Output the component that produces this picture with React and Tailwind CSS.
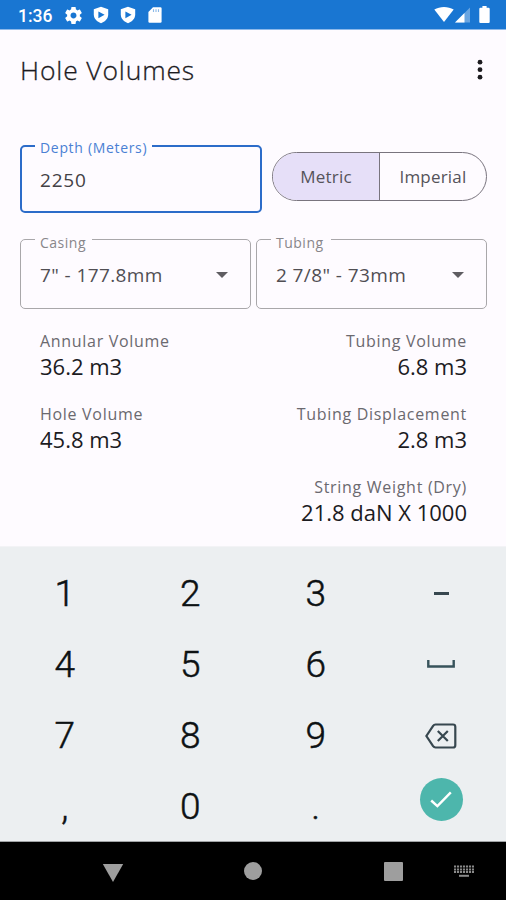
function ShieldPlay() {
  return (
    <svg viewBox="0 0 16 18" className="h-[18px] w-4">
      <path d="M8 .8 15.2 3.2V8.5C15.2 12.6 12 15.8 8 17.2 4 15.8 .8 12.6 .8 8.5V3.2Z" fill="#fff" />
      <path d="M5.4 5.4 11.6 8.8 5.4 12.2Z" fill="#1976d2" />
    </svg>
  );
}

function StatusBar() {
  return (
    <header className="flex h-[30px] items-start border-b border-[#8db9ea] bg-[#1976d2] text-white">
      <span className="ml-[18px] mt-[5px] w-[35px] font-['Roboto',sans-serif] text-[17.5px] leading-[22px] font-medium">1:36</span>
      <div className="mt-[6px] ml-[12px] flex items-center">
        <svg viewBox="2 2 20 20" className="h-[17px] w-[17px]">
          <path
            fill="#fff"
            d="M19.43 12.98c.04-.32.07-.64.07-.98s-.03-.66-.07-.98l2.11-1.65c.19-.15.24-.42.12-.64l-2-3.46c-.12-.22-.39-.3-.61-.22l-2.49 1c-.52-.4-1.08-.73-1.69-.98l-.38-2.65C14.46 2.18 14.25 2 14 2h-4c-.25 0-.46.18-.49.42l-.38 2.65c-.61.25-1.17.59-1.69.98l-2.49-1c-.23-.09-.49 0-.61.22l-2 3.46c-.13.22-.07.49.12.64l2.11 1.65c-.04.32-.07.65-.07.98s.03.66.07.98l-2.11 1.65c-.19.15-.24.42-.12.64l2 3.46c.12.22.39.3.61.22l2.49-1c.52.4 1.08.73 1.69.98l.38 2.65c.03.24.24.42.49.42h4c.25 0 .46-.18.49-.42l.38-2.65c.61-.25 1.17-.59 1.69-.98l2.49 1c.23.09.49 0 .61-.22l2-3.46c.12-.22.07-.49-.12-.64l-2.11-1.65zM12 15.5c-1.93 0-3.5-1.57-3.5-3.5s1.57-3.5 3.5-3.5 3.5 1.57 3.5 3.5-1.57 3.5-3.5 3.5z"
          />
        </svg>
        <div className="ml-[11px] flex gap-[11px]">
          <ShieldPlay />
          <ShieldPlay />
        </div>
        <svg viewBox="0 0 14 16" className="ml-3 h-4 w-[14px]">
          <path d="M5 .3H12.4Q13.6 .3 13.6 1.5V14.6Q13.6 15.8 12.4 15.8H1.6Q.4 15.8 .4 14.6V5Z" fill="#fff" />
          <path d="M5.5 2.3V5M8 2.3V5M10.5 2.3V5" stroke="#1976d2" strokeWidth="1.1" opacity=".5" />
        </svg>
      </div>
      <div className="mt-[6px] mr-[16px] ml-auto flex items-start">
        <svg viewBox="0 0 20 17" className="mr-[-1px] h-[17px] w-5">
          <path d="M.3 3.6C6 .2 14 .2 19.7 3.6L10 16Z" fill="#fff" />
        </svg>
        <svg viewBox="0 0 15 16" className="mt-[1px] ml-[2px] mr-[1px] h-4 w-[15px]">
          <path d="M15 .5V15.6H0Z" fill="#fff" opacity=".35" />
          <path d="M9.5 6V15.6H0Z" fill="#fff" />
        </svg>
        <svg viewBox="0 0 11 17" className="ml-[8px] h-[17px] w-[11px]">
          <path d="M3.4 0H7.6V1.8H9.6Q10.7 1.8 10.7 2.9V16Q10.7 17 9.6 17H1.4Q.3 17 .3 16V2.9Q.3 1.8 1.4 1.8H3.4Z" fill="#fff" />
        </svg>
      </div>
    </header>
  );
}

function SelectField({ label, value, labelClass }) {
  return (
    <div className="relative flex h-[70px] w-[231px] items-center justify-between rounded-[5px] border-[1.5px] border-[#a9a7aa] pr-[22px] pl-[19px]">
      <span className={`absolute top-[-7px] left-[14px] bg-[#fefbff] pl-[5px] text-[14px] leading-[20px] tracking-[0.5px] text-[#88868a] ${labelClass}`}>
        {label}
      </span>
      <span className="mt-[1px] text-[19px] leading-7 tracking-[0.4px] text-[#504e53]">{value}</span>
      <svg viewBox="0 0 12 6" className="mt-[1px] h-[6px] w-3">
        <path d="M0 0H12L6 6Z" fill="#5f5d62" />
      </svg>
    </div>
  );
}

function Result({ label, value }) {
  return (
    <div className="h-[73px]">
      <div className="text-[16px] leading-[26px] tracking-[0.7px] text-[#6b696f]">{label}</div>
      <div className="mt-[-2px] text-[22px] leading-[28px] text-[#1c1b1f]">{value}</div>
    </div>
  );
}

function Key({ children }) {
  return <div className="flex h-[71px] items-center justify-center">{children}</div>;
}

function Keypad() {
  return (
    <section className="grid h-[296px] shrink-0 grid-cols-4 border-t border-b border-t-[#f3f3f6] border-b-[#a0a3a5] bg-[#eceff1] pt-[11px] pr-[2px] pl-[2px] font-['Roboto',sans-serif] text-[37px] leading-none font-light text-[#0c1113] [-webkit-text-stroke:0.5px_#0c1113]">
      <Key>1</Key>
      <Key>2</Key>
      <Key>3</Key>
      <Key>
        <span className="h-[3px] w-[15px] bg-[#37474f]" />
      </Key>
      <Key>4</Key>
      <Key>5</Key>
      <Key>6</Key>
      <Key>
        <svg viewBox="0 0 28 8" className="mb-[2px] h-2 w-7">
          <path d="M1.3 0V6.5H26.7V0" fill="none" stroke="#37535b" strokeWidth="2.4" />
        </svg>
      </Key>
      <Key>7</Key>
      <Key>8</Key>
      <Key>9</Key>
      <Key>
        <svg viewBox="0 0 32 26" className="h-[26px] w-8" fill="none" stroke="#37474f" strokeWidth="2.2">
          <path d="M10.5 1.5H28Q30.3 1.5 30.3 3.8V22.2Q30.3 24.5 28 24.5H10.5Q9 24.5 8.1 23.2L1.4 13 8.1 2.8Q9 1.5 10.5 1.5Z" />
          <path d="M12.8 8 22.8 18M22.8 8 12.8 18" />
        </svg>
      </Key>
      <Key>,</Key>
      <Key>0</Key>
      <Key>.</Key>
      <Key>
        <div className="mb-[15px] flex h-[43px] w-[43px] items-center justify-center rounded-full bg-[#4db6ac]">
          <svg viewBox="0 0 22 17" className="h-[17px] w-[22px]">
            <path d="M1.2 9.5 7.4 15.2 20.8 1.4" fill="none" stroke="#fff" strokeWidth="2.4" />
          </svg>
        </div>
      </Key>
    </section>
  );
}

function NavigationBar() {
  return (
    <footer className="flex h-[58px] shrink-0 items-center bg-black">
      <svg viewBox="0 0 22 18" className="mt-[3px] ml-[102px] h-[18px] w-[22px]">
        <path d="M.8 0H21.2L11 18Z" fill="#9e9e9e" />
      </svg>
      <span className="ml-[120px] h-[18px] w-[18px] rounded-full bg-[#9e9e9e]" />
      <span className="ml-[122px] h-[19px] w-[19px] rounded-[1px] bg-[#9e9e9e]" />
      <svg viewBox="0 0 20 12" className="ml-[51px] h-3 w-5" stroke="#8a8a8a" strokeWidth="2">
        <path d="M0 1.5H20M0 4.4H20M0 7H20" strokeDasharray="2.1 .9" />
        <path d="M5 10.8H15" />
      </svg>
    </footer>
  );
}

export default function App() {
  return (
    <div className="flex h-[900px] w-[506px] flex-col overflow-hidden bg-[#fefbff] font-['Open_Sans',sans-serif]">
      <StatusBar />
      <div className="flex h-[80px] items-center justify-between pr-[22px] pl-[20px]">
        <h1 className="text-[26.5px] leading-[36px] font-light tracking-[0.85px] text-[#1c1b1f] [-webkit-text-stroke:0.3px_#1c1b1f]">Hole Volumes</h1>
        <svg viewBox="0 0 8 22" className="mb-[1px] h-[22px] w-2" fill="#1c1b1f">
          <circle cx="4" cy="3.2" r="2.4" />
          <circle cx="4" cy="10.7" r="2.4" />
          <circle cx="4" cy="18.2" r="2.4" />
        </svg>
      </div>
      <div className="flex items-start gap-[10px] pt-[35px] pl-5">
        <div className="relative flex h-[68px] w-[242px] items-center rounded-[5px] border-2 border-[#2c6cc9] pl-[18px]">
          <span className="absolute top-[-9px] left-[13px] w-[117px] bg-[#fefbff] pl-[5px] text-[14px] leading-[20px] tracking-[0.68px] whitespace-nowrap text-[#4a80d4]">
            Depth (Meters)
          </span>
          <span className="mt-[2px] text-[19px] leading-7 tracking-[0.8px] text-[#434145]">2250</span>
        </div>
        <div className="mt-[7px] flex h-[49px] w-[215px] overflow-hidden rounded-full border border-[#79747e] text-[17px] tracking-[0.2px] text-[#55535a]">
          <div className="flex w-[107px] items-center justify-center border-r border-[#79747e] bg-[#e6dff8]">Metric</div>
          <div className="flex flex-1 items-center justify-center">Imperial</div>
        </div>
      </div>
      <div className="flex gap-[5px] pt-[26px] pl-5">
        <SelectField label="Casing" value={'7" - 177.8mm'} labelClass="w-[57px]" />
        <SelectField label="Tubing" value={'2 7/8" - 73mm'} labelClass="w-[60px]" />
      </div>
      <main className="flex min-h-0 flex-1 justify-between pr-[39px] pl-[40px] pt-[19px]">
        <div>
          <Result label="Annular Volume" value="36.2 m3" />
          <Result label="Hole Volume" value="45.8 m3" />
        </div>
        <div className="text-right">
          <Result label="Tubing Volume" value="6.8 m3" />
          <Result label="Tubing Displacement" value="2.8 m3" />
          <Result label="String Weight (Dry)" value="21.8 daN X 1000" />
        </div>
      </main>
      <Keypad />
      <NavigationBar />
    </div>
  );
}
